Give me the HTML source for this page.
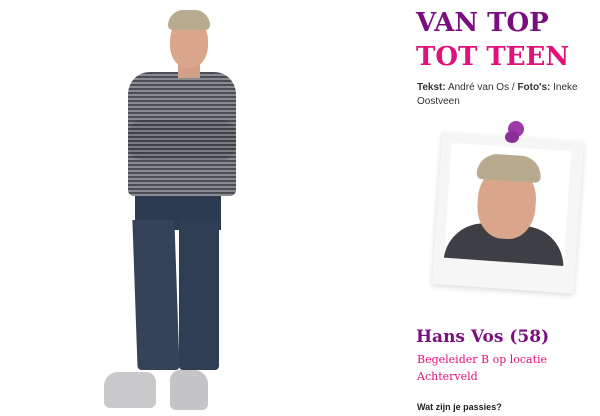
<!DOCTYPE html>
<html><head><meta charset="utf-8"><style>
*{margin:0;padding:0;box-sizing:border-box}
body{width:600px;height:416px;background:#fff;position:relative;overflow:hidden;font-family:"Liberation Sans",sans-serif}
.a{position:absolute}
.h{font-family:"DejaVu Serif",serif;font-weight:bold;font-size:26px;line-height:34px;letter-spacing:0}
</style></head><body>
<div class="a h" style="left:416px;top:6px;color:#7b0e7e">VAN TOP</div>
<div class="a h" style="left:416px;top:40px;color:#e0117a">TOT TEEN</div>
<div class="a" style="left:417px;top:81px;font-size:10px;line-height:14px;color:#333;width:180px"><b>Tekst:</b> André van Os / <b>Foto's:</b> Ineke Oostveen</div>

<div class="a" style="left:437px;top:137px;width:142px;height:152px;background:#f6f6f6;transform:rotate(4deg);box-shadow:0 2px 6px rgba(0,0,0,.15)">
  <div class="a" style="left:10px;top:10px;width:120px;height:115px;background:#fff;overflow:hidden">
    <div class="a" style="left:0;top:78px;width:120px;height:40px;background:#3e3f45;border-radius:40px 40px 0 0"></div>
    <div class="a" style="left:30px;top:20px;width:58px;height:72px;background:#d9a68b;border-radius:45%"></div>
    <div class="a" style="left:27px;top:8px;width:64px;height:26px;background:#b8aa8e;border-radius:30px 30px 8px 8px"></div>
  </div>
</div>
<div class="a" style="left:508px;top:121px;width:16px;height:16px;border-radius:50%;background:#9b3aa8"></div>
<div class="a" style="left:505px;top:131px;width:14px;height:12px;border-radius:50%;background:#8a2f98"></div>

<div class="a h" style="left:416px;top:325px;font-size:17px;line-height:24px;color:#7b0e7e">Hans Vos (58)</div>
<div class="a" style="left:417px;top:351px;font-family:'DejaVu Serif',serif;font-size:11px;line-height:17px;color:#e0117a">Begeleider B op locatie<br>Achterveld</div>
<div class="a" style="left:417px;top:402px;font-size:9px;font-weight:bold;color:#222">Wat zijn je passies?</div>

<div class="a" style="left:135px;top:190px;width:86px;height:180px">
  <div class="a" style="left:0;top:0;width:86px;height:40px;background:#2d3b52"></div>
  <div class="a" style="left:0;top:30px;width:42px;height:150px;background:#34425a;border-radius:0 0 4px 4px;transform:skewX(2deg)"></div>
  <div class="a" style="left:44px;top:30px;width:40px;height:150px;background:#2f3d55;border-radius:0 0 4px 4px"></div>
</div>
<div class="a" style="left:104px;top:372px;width:52px;height:36px;background:#c9c9cb;border-radius:14px 10px 6px 6px"></div>
<div class="a" style="left:170px;top:370px;width:38px;height:40px;background:#c5c5c7;border-radius:10px 14px 6px 6px"></div>
<div class="a" style="left:128px;top:72px;width:108px;height:124px;background:repeating-linear-gradient(#4a4d55 0 2px,#8a8c92 2px 4px);border-radius:22px 22px 6px 6px"></div>
<div class="a" style="left:128px;top:120px;width:108px;height:40px;background:repeating-linear-gradient(#3f4249 0 2px,#7b7d83 2px 4px);border-radius:14px"></div>
<div class="a" style="left:178px;top:60px;width:22px;height:18px;background:#d2a088"></div>
<div class="a" style="left:170px;top:18px;width:38px;height:50px;background:#d9a68b;border-radius:45%"></div>
<div class="a" style="left:168px;top:10px;width:42px;height:20px;background:#b9ab8f;border-radius:20px 20px 6px 6px"></div>
</body></html>
